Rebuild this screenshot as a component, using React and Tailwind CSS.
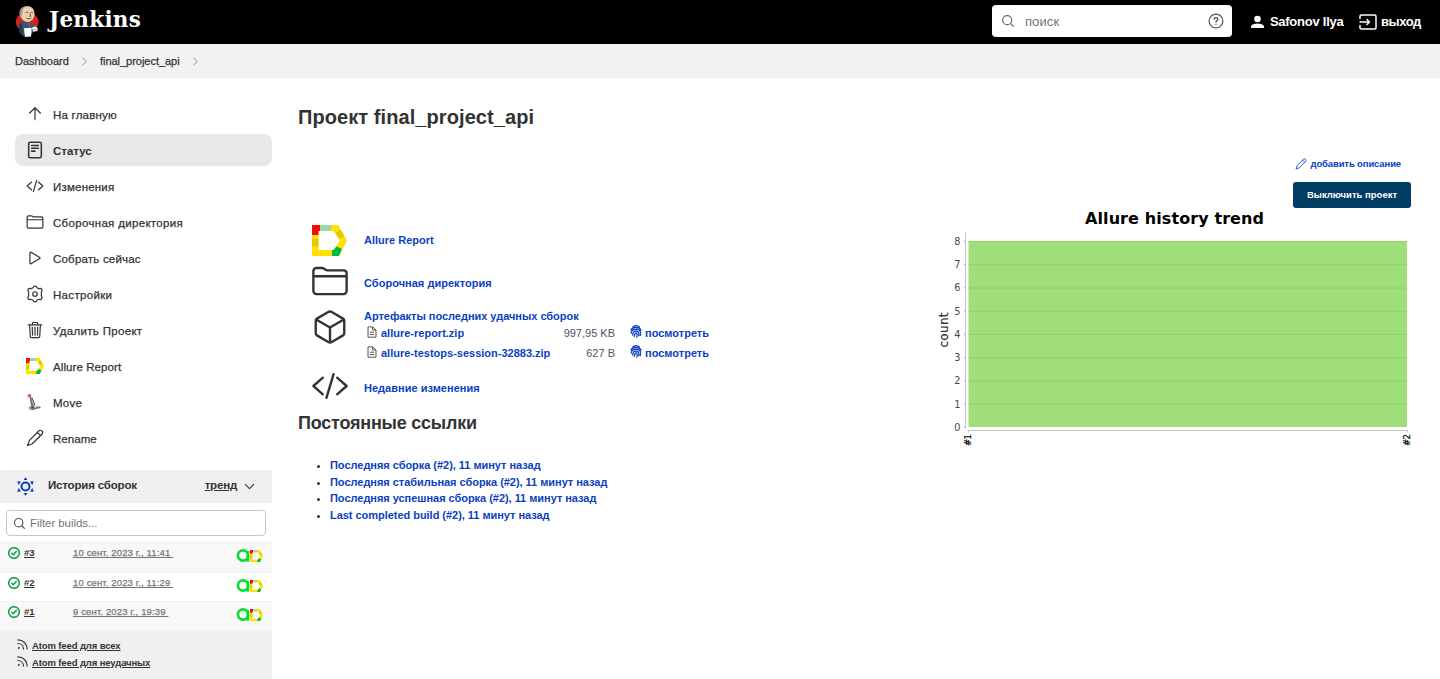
import React from "react";

const stroke = { fill: "none", stroke: "currentColor", strokeLinecap: "round", strokeLinejoin: "round" };

function Svg({ className, vb = "0 0 512 512", w = 32, children }) {
  return (
    <svg className={className} viewBox={vb} strokeWidth={w} {...stroke}>
      {children}
    </svg>
  );
}

const ArrowUp = (p) => (
  <Svg {...p}>
    <path d="M100 234l156-156 156 156M256 95v325" />
  </Svg>
);
const Doc = (p) => (
  <Svg {...p}>
    <rect x="76" y="36" width="360" height="440" rx="44" />
    <path d="M160 128h192M160 208h192M160 288h96" />
  </Svg>
);
const Code = (p) => (
  <Svg {...p}>
    <path d="M160 368L32 256l128-112M352 368l128-112-128-112M304 96l-96 320" />
  </Svg>
);
const Folder = (p) => (
  <Svg {...p}>
    <path d="M440 432H72a40 40 0 01-40-40V120a40 40 0 0140-40h75.890a40 40 0 0122.190 6.720l27.840 18.560a40 40 0 0022.190 6.720H440a40 40 0 0140 40v240a40 40 0 01-40 40zM32 192h448" />
  </Svg>
);
const Play = (p) => (
  <Svg {...p}>
    <path d="M112 111v290c0 17.440 17 28.520 31 20.160l247.900-148.370c12.120-7.250 12.120-26.330 0-33.580L143 90.840c-14-8.360-31 2.720-31 20.160z" />
  </Svg>
);
const Gear = (p) => (
  <Svg {...p}>
    <circle cx="256" cy="256" r="64" />
    <path d="M256 32c34 0 46 12 58 50 30 6 36 10 60 24 36-18 58-12 76 18s14 52-16 80c8 32 8 72 0 104 30 28 34 50 16 80s-40 36-76 18c-24 14-30 18-60 24-12 38-24 50-58 50s-46-12-58-50c-30-6-36-10-60-24-36 18-58 12-76-18s-14-52 16-80c-8-32-8-72 0-104-30-28-34-50-16-80s40-36 76-18c24-14 30-18 60-24 12-38 24-50 58-50z" />
  </Svg>
);
const Trash = (p) => (
  <Svg {...p}>
    <path d="M102 112l20 330c.95 18.490 14.400 32 32 32h204c17.670 0 30.870-13.510 32-32l20-330M64 112h384M182 112V66a23.930 23.930 0 0124-24h100a23.930 23.930 0 0124 24v46M256 176v230M178 176l8 230M334 176l-8 230" />
  </Svg>
);
const Pencil = (p) => (
  <Svg {...p}>
    <path d="M360 56c26-26 66-26 92 0s26 66 0 92L180 420 44 468l48-136zM322 96l90 90" />
  </Svg>
);
const Cube = (p) => (
  <Svg {...p}>
    <path d="M448 341.370V170.610A32 32 0 00432.110 143l-152-88.460a47.940 47.940 0 00-48.240 0L79.890 143A32 32 0 0064 170.610v170.760A32 32 0 0079.890 369l152 88.460a48 48 0 0048.240 0l152-88.460A32 32 0 00448 341.370zM69 153.990l187 110 187-110M256 463.990v-200" />
  </Svg>
);
const Search = (p) => (
  <Svg {...p}>
    <circle cx="225" cy="225" r="165" />
    <path d="M345 345l105 105" />
  </Svg>
);
const ChevronRight = (p) => (
  <Svg {...p}>
    <path d="M160 60l196 196-196 196" />
  </Svg>
);

function AllureD({ className }) {
  return (
    <svg className={className} viewBox="0 0 35 31" preserveAspectRatio="none">
      <path fill="#ffe000" fillRule="evenodd" d="M0 0H26L35 15.500 27 31H0ZM6.500 6V25H21.500L28 15.500 21.500 6Z" />
      <path fill="#f50a0a" d="M0 0H8V6H6.500V10H0Z" />
      <path fill="#9bd9a3" d="M8 0H19V6H8Z" />
      <path fill="#e5ca00" d="M0 14H6.500V21.500H0ZM23.500 8L28.500 4.500 32.500 11 27 14Z" />
      <path fill="#00b944" d="M20 31V25H21.500L24.500 21.500 30 24 27 31Z" />
    </svg>
  );
}

function MoveIcon({ className }) {
  return (
    <svg className={className} viewBox="0 0 16 16">
      <path d="M3.500 3L6 12M5 4l3 7" stroke="#555" strokeWidth="1.100" fill="none" />
      <path d="M3.500 5L7.500 11.500 4.500 12z" fill="#777" />
      <ellipse cx="5.500" cy="13.300" rx="3" ry="1.900" fill="#999" />
      <path d="M5 14.500L13 12.800M9 12.500h3.500" stroke="#777" strokeWidth="1.200" />
      <circle cx="5.700" cy="12.800" r="0.900" fill="#333" />
      <circle cx="3" cy="2.500" r="1.800" fill="#d98080" />
      <circle cx="3.600" cy="2.300" r="0.700" fill="#b33" />
    </svg>
  );
}

function Butler({ className }) {
  return (
    <svg className={className} viewBox="0 0 26 34">
      <ellipse cx="12.700" cy="17" rx="11.800" ry="10" fill="#d6211f" />
      <path d="M4.500 18L11 15.500 18 15.800 21 20 20.500 25 17 30 8 31.500 4.500 27Z" fill="#32566b" />
      <path d="M4.200 18L7.500 20 8 31 5 29Z" fill="#203d4f" />
      <path d="M5.500 6C6 2 9 .5 13 .5S20 3 20.300 8C20.500 13 17.500 17 13.500 17S7 14 5.500 11C4.500 9 5 7 5.500 6Z" fill="#ebcfae" />
      <path d="M5.300 4.500C3.800 7 4.800 10 6.500 12.500L7.500 8 8.500 3.500 11 1C8.500 1 6.500 2.500 5.300 4.500Z" fill="#a89a86" />
      <path d="M11 7.500c1-1 2-1 3 0M16 7.500c1-.7 2-.7 2.800 0M12 13c2 1 4 1 5 0M15.500 8.500l1 2.500h-1.500" fill="none" stroke="#4a352a" strokeWidth=".9" />
      <path d="M12 17l2.500 6 2.500-6z" fill="#4b6b80" />
      <path d="M11.500 16.500l3.800 1.300 4-1.600v4l-4-1.400-3.400 1.700z" fill="#d6201f" />
      <path d="M9.300 23.500l8-.4-.6 8.900-6.400.6z" fill="#fff" />
      <path d="M17.500 23l3.500-1.500 2.800 2-.6 2.900-4.200.8z" fill="#f2f2f2" />
      <path d="M18.500 25l4-.6" stroke="#777" strokeWidth=".6" />
    </svg>
  );
}

function Fingerprint({ className }) {
  return (
    <svg className={className} viewBox="0 0 12 13" fill="none" stroke="#0b3fc0" strokeLinecap="round">
      <path strokeWidth="1.300" d="M3 1.800C5 .4 7.500.4 9.200 1.800M1 5C2.300 2.400 4 2.500 6 2.500s4 .3 5 2.700M1.200 8.200C1.500 5 3.500 4.300 6 4.300s4.600 1.400 4.600 4M2.600 10C3 7 3.800 6.100 6 6.100s3.200 1.600 2.900 4.600M4.300 11.400C4.800 9 4.600 8 6 8s1.400 2 .8 4.200M10.600 9.500l-.3 1" />
    </svg>
  );
}

function FileIcon({ className }) {
  return (
    <svg className={className} viewBox="0 0 10 12" fill="none" stroke="#555" strokeWidth="1" strokeLinejoin="round">
      <path d="M1 .9h4.700L9 4v7.200H1zM5.600.9V4H9M2.800 6.200h4.400M2.800 8.600h4.400" />
    </svg>
  );
}

function Rss({ className }) {
  return (
    <svg className={className} viewBox="0 0 12 12" fill="none" stroke="#333" strokeWidth="1.250" strokeLinecap="round">
      <path d="M.9 1c5.800 0 10.200 4.200 10.200 10M.9 4.900c3.600 0 6.200 2.500 6.200 6.100" />
      <circle cx="2" cy="9.900" r="1.100" fill="#333" stroke="none" />
    </svg>
  );
}

const menu = [
  ["На главную", ArrowUp, "tracking-[0.2px]"],
  ["Статус", Doc, "tracking-[0px]"],
  ["Изменения", Code, "tracking-[0.2px]"],
  ["Сборочная директория", Folder, "tracking-[0.320px]"],
  ["Собрать сейчас", Play, "tracking-[0.2px]"],
  ["Настройки", Gear, "tracking-[0.320px]"],
  ["Удалить Проект", Trash, "tracking-[0.320px]"],
  ["Allure Report", AllureD, "tracking-[0.080px]"],
  ["Move", MoveIcon, "tracking-[0.250px]"],
  ["Rename", Pencil, "tracking-[0.050px]"],
];

function Header() {
  return (
    <header className="flex h-11 items-center bg-black pl-[15px] pr-[19px] text-white">
      <Butler className="mr-[9px] h-[34px] w-[25px]" />
      <span className="relative -top-[2px] font-['DejaVu_Serif'] text-[21.500px] font-bold tracking-[0.250px]">Jenkins</span>
      <div className="relative -top-px ml-auto flex h-8 w-60 items-center rounded bg-white pl-[9px] pr-2">
        <Search className="h-[14px] w-[14px] text-[#666]" w={42} />
        <span className="relative top-px ml-[10px] text-[13px] tracking-[0.150px] text-[#757575]">поиск</span>
        <Svg className="ml-auto h-4 w-4 text-[#4d545d]" vb="0 0 16 16" w={1.2}>
          <circle cx="8" cy="8" r="6.900" />
          <path d="M6.200 6.300C6.200 5.200 7 4.600 8 4.600s1.800.6 1.800 1.600C9.800 7.400 8 7.600 8 9M8 11.200v.1" strokeWidth="1.400" />
        </Svg>
      </div>
      <div className="ml-[18px] flex w-[94px] items-center gap-[5px]">
        <svg className="h-[14px] w-[15px] shrink-0" viewBox="0 0 15 14" fill="#fff">
          <circle cx="7.500" cy="4" r="3.300" />
          <path d="M1 13v-1.800C1.500 9.500 4.500 8.600 7.500 8.600s6 .9 6.500 2.600V13z" />
        </svg>
        <span className="whitespace-nowrap text-[13px] font-bold tracking-[-0.250px]">Safonov Ilya</span>
      </div>
      <div className="ml-[15px] flex items-center gap-1">
        <Svg className="h-4 w-[18px]" vb="0 0 18 16" w={1.5}>
          <path d="M1 4.500V2.200Q1 1 2.200 1H15.800Q17 1 17 2.200V13.800Q17 15 15.800 15H2.200Q1 15 1 13.800V11.500M1 8H10.500M8 5.500L10.500 8 8 10.500" />
        </Svg>
        <span className="text-[13px] font-bold tracking-[-0.380px]">выход</span>
      </div>
    </header>
  );
}

function Builds() {
  const rows = [
    ["#3", "10 сент. 2023 г., 11:41", "h-[30px] bg-[#f8f8f8]"],
    ["#2", "10 сент. 2023 г., 11:29", "h-[29px] bg-white"],
    ["#1", "9 сент. 2023 г., 19:39", "h-[29px] bg-[#f8f8f8]"],
  ];
  return (
    <section className="mt-4 flex grow flex-col bg-[#f0f0f0]">
      <div className="flex h-[33px] items-center pl-[17px] pr-[17px] text-[11.500px] font-bold text-[#333]">
        <svg className="h-[19px] w-[17px]" viewBox="0 0 17 19" fill="#0b3fc0">
          <circle cx="8.500" cy="9.500" r="4" fill="none" stroke="#0b3fc0" strokeWidth="2" />
          <path d="M8.500 .3l2 2.600h-4zM8.500 18.700l2-2.600h-4zM.2 4.200l3.800.2L1.700 7.900zM16.800 4.200l-3.800.2 2.300 3.500zM.2 14.800l3.800-.2-2.300-3.500zM16.800 14.800l-3.800-.2 2.300-3.500z" />
        </svg>
        <span className="relative -top-px ml-[14px] tracking-[-0.180px]">История сборок</span>
        <span className="relative -top-px ml-auto tracking-[-0.200px] underline underline-offset-1">тренд</span>
        <Svg className="ml-[7px] h-[11px] w-[11px]" w={50}>
          <path d="M60 160l196 196 196-196" />
        </Svg>
      </div>
      <div className="h-[39px] bg-white px-[6px] pt-[7px]">
        <div className="flex h-[26px] items-center rounded border border-[#bccad3] bg-white pl-[6px] text-[11.500px] text-[#757575]">
          <Search className="mr-[4px] h-[13px] w-[13px] text-[#555]" w={46} />
          <span className="relative top-px tracking-[-0.070px]">Filter builds...</span>
        </div>
      </div>
      {rows.map(([n, d, c]) => (
        <div key={n} className={"flex border-t border-[#f1f1f1] pl-2 pr-[9px] " + c}>
          <Svg className="mt-1 h-3 w-3 shrink-0 text-[#0f9d45]" vb="0 0 12 12" w={1.5}>
            <circle cx="6" cy="6" r="5.300" />
            <path d="M3.800 6.200l1.500 1.500 3-3.200" />
          </Svg>
          <span className="ml-1 mt-[3px] w-[49px] text-[9.500px] leading-[14px] font-bold text-[#333] underline underline-offset-1">{n}</span>
          <span className="mt-[3px] whitespace-pre text-[9.500px] leading-[14px] tracking-[0.140px] text-[#777] underline underline-offset-1 [-webkit-text-stroke:0.250px]">{d + " "}</span>
          <div className="ml-auto mt-[5px] flex">
            <svg className="h-[14px] w-[14px]" viewBox="0 0 14 14" fill="none" stroke="#08dd30" strokeWidth="2.700">
              <circle cx="7" cy="7.500" r="5.100" />
              <path d="M11.900 3v10.700" />
            </svg>
            <AllureD className="mt-[2px] h-[12px] w-[13px]" />
          </div>
        </div>
      ))}
      <div className="flex flex-col gap-[3px] pl-[17px] pt-[9px] text-[9.500px] leading-[14px] font-bold text-[#333]">
        {["Atom feed для всех", "Atom feed для неудачных"].map((t) => (
          <div key={t} className="flex">
            <Rss className="mr-[4px] h-[11px] w-[11px]" />
            <span className="tracking-[-0.120px] underline underline-offset-1">{t}</span>
          </div>
        ))}
      </div>
    </section>
  );
}

function Chart() {
  const ys = [427, 403.8, 380.5, 357.2, 334, 310.8, 287.5, 264.2, 241];
  return (
    <svg className="block h-[240px] w-[480px]" viewBox="935 208 480 240" fontFamily="DejaVu Sans">
      <text x="1085" y="223.500" fontSize="16" fontWeight="bold" textLength="179">Allure history trend</text>
      <rect x="968.500" y="241" width="438.500" height="186" fill="#a0dd7b" />
      {ys.map((y, i) => (
        <g key={i}>
          {i > 0 && <path d={`M968.500 ${y + 0.5}H1407`} stroke="#8bc769" strokeWidth=".8" strokeDasharray="3 1" />}
          <path d={`M964 ${y + 0.3}h2`} stroke="#999" />
          <text x="960.500" y={y + 3.7} fontSize="9.800" textAnchor="end" fill="#4a4a4a">{i}</text>
        </g>
      ))}
      <path d="M965.500 232.500V427.500M968.500 432.500V430.500H1407.500V432.500" fill="none" stroke="#c4c4c4" />
      <text transform="translate(948 347.500) rotate(-90)" fontSize="12" textLength="35" fill="#333" stroke="#333" strokeWidth=".2">count</text>
      <text transform="translate(971 446) rotate(-90)" fontSize="8.500" textLength="12" stroke="#000" strokeWidth=".2">#1</text>
      <text transform="translate(1409.500 446) rotate(-90)" fontSize="8.500" textLength="12" stroke="#000" strokeWidth=".2">#2</text>
    </svg>
  );
}

export default function App() {
  return (
    <div className="flex h-[679px] w-[1440px] flex-col overflow-hidden bg-white font-['Liberation_Sans',Arial,sans-serif] text-[#333]">
      <Header />
      <nav className="flex h-[34px] shrink-0 items-center bg-[#f2f2f2] pl-[15px] text-[11px] [-webkit-text-stroke:0.250px]">
        <span className="w-[65px]">Dashboard</span>
        <ChevronRight className="h-[9px] w-[9px] text-[#777]" w={46} />
        <span className="ml-[11px] w-[91px] tracking-[-0.030px]">final_project_api</span>
        <ChevronRight className="h-[9px] w-[9px] text-[#777]" w={46} />
      </nav>
      <div className="flex grow">
        <aside className="flex w-[272px] flex-col pt-5">
          <div className="flex flex-col gap-1 pl-[15px]">
            {menu.map(([t, I, tr], i) => (
              <div key={t} className={"flex h-8 items-center rounded-lg pl-[11px] text-[11.500px] " + (i === 1 ? "bg-[#e8e8e8] font-bold" : "[-webkit-text-stroke:0.250px]")}>
                <I className={"w-[18px] shrink-0 " + (i === 7 ? "h-[16px]" : "h-[18px]")} w={i === 1 ? 44 : 34} />
                <span className={"relative top-[2px] ml-[9px] whitespace-nowrap " + tr}>{t}</span>
              </div>
            ))}
          </div>
          <Builds />
        </aside>
        <main className="flex grow justify-between pl-[26px] pr-[25px]">
          <div className="flex flex-col pt-[27px]">
            <h1 className="h-6 text-[20px] leading-6 font-bold tracking-[0.080px] whitespace-nowrap">Проект final_project_api</h1>
            <div className="mt-[92px] flex flex-col pl-[13px] text-[11px] leading-[14px] font-bold text-[#0b3fc0]">
              <div className="flex h-[41px] items-start">
                <AllureD className="mt-[4px] ml-[1px] h-[31px] w-[35px]" />
                <span className="ml-[17px] mt-[12px]">Allure Report</span>
              </div>
              <div className="flex h-[43px] items-start">
                <Folder className="h-[38px] w-[38px] text-[#333]" w={32} />
                <span className="ml-[15px] mt-[14px] tracking-[0.030px]">Сборочная директория</span>
              </div>
              <div className="flex h-[63px] items-start">
                <Cube className="mt-[3px] h-[38px] w-[38px] text-[#333]" w={32} />
                <div className="ml-[15px] mt-[4px]">
                  <div className="tracking-[-0.030px]">Артефакты последних удачных сборок</div>
                  {[["allure-report.zip", "997,95 KB"], ["allure-testops-session-32883.zip", "627 B"]].map(([a, b]) => (
                    <div key={a} className="flex h-5 items-start pt-[3px]">
                      <FileIcon className="ml-[3px] h-3 w-[10px]" />
                      <span className="ml-[4px] w-[174px] whitespace-nowrap">{a}</span>
                      <span className="w-[60px] text-right font-normal text-[#4d545d]">{b}</span>
                      <Fingerprint className="-mt-px ml-[15px] h-[13px] w-[12px]" />
                      <span className="ml-[3px]">посмотреть</span>
                    </div>
                  ))}
                </div>
              </div>
              <div className="flex h-[45px] items-start">
                <Code className="-mt-px h-[38px] w-[38px] text-[#333]" w={32} />
                <span className="ml-[15px] mt-[13px] tracking-[0.020px]">Недавние изменения</span>
              </div>
            </div>
            <h2 className="-mt-[2px] h-6 text-[18px] leading-6 font-bold tracking-[-0.220px] whitespace-nowrap">Постоянные ссылки</h2>
            <ul className="mt-[22px] list-disc pl-[32px] text-[11px] leading-[16.600px] font-bold tracking-[-0.035px] marker:text-[#333]">
              {["Последняя сборка (#2), 11 минут назад", "Последняя стабильная сборка (#2), 11 минут назад", "Последняя успешная сборка (#2), 11 минут назад", "Last completed build (#2), 11 минут назад"].map((t) => (
                <li key={t} className="text-[#0b3fc0]">{t}</li>
              ))}
            </ul>
          </div>
          <div className="flex flex-col items-end pt-[79px]">
            <div className="mr-[14px] flex h-[14px] items-center text-[9.500px] font-bold tracking-[-0.130px] text-[#0b3fc0]">
              <Pencil className="mr-[3px] h-3 w-3" w={36} />
              добавить описание
            </div>
            <button className="mr-1 mt-[11px] h-[26px] w-[118px] rounded-[3px] bg-[#003d62] text-[9.500px] font-bold whitespace-nowrap text-white">Выключить проект</button>
            <Chart />
          </div>
        </main>
      </div>
    </div>
  );
}
